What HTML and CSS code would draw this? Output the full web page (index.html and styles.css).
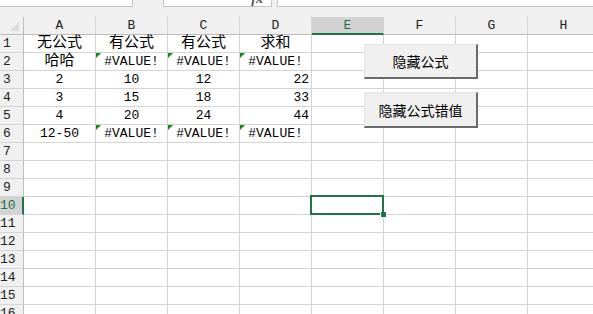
FILE: index.html
```html
<!DOCTYPE html>
<html lang="zh-CN">
<head>
  <meta charset="UTF-8" />
  <title>隐藏公式</title>
  <link rel="stylesheet" href="styles.css">
</head>
<body>
  <div class="formula-bar">
    <div class="name-box"></div>
    <div class="fx-box"><span class="fx">fx</span></div>
    <div class="input-box"></div>
  </div>

  <div class="sheet">
    <div class="corner"></div>
    <div class="col-head">A</div>
    <div class="col-head">B</div>
    <div class="col-head">C</div>
    <div class="col-head">D</div>
    <div class="col-head active">E</div>
    <div class="col-head">F</div>
    <div class="col-head">G</div>
    <div class="col-head">H</div>

    <div class="row-head">1</div>
    <div class="cell c zh">无公式</div>
    <div class="cell c zh">有公式</div>
    <div class="cell c zh">有公式</div>
    <div class="cell c zh">求和</div>
    <div class="cell"></div><div class="cell"></div><div class="cell"></div><div class="cell"></div>

    <div class="row-head">2</div>
    <div class="cell c zh">哈哈</div>
    <div class="cell c err">#VALUE!</div>
    <div class="cell c err">#VALUE!</div>
    <div class="cell c err">#VALUE!</div>
    <div class="cell"></div><div class="cell"></div><div class="cell"></div><div class="cell"></div>

    <div class="row-head">3</div>
    <div class="cell c">2</div>
    <div class="cell c">10</div>
    <div class="cell c">12</div>
    <div class="cell r">22</div>
    <div class="cell"></div><div class="cell"></div><div class="cell"></div><div class="cell"></div>

    <div class="row-head">4</div>
    <div class="cell c">3</div>
    <div class="cell c">15</div>
    <div class="cell c">18</div>
    <div class="cell r">33</div>
    <div class="cell"></div><div class="cell"></div><div class="cell"></div><div class="cell"></div>

    <div class="row-head">5</div>
    <div class="cell c">4</div>
    <div class="cell c">20</div>
    <div class="cell c">24</div>
    <div class="cell r">44</div>
    <div class="cell"></div><div class="cell"></div><div class="cell"></div><div class="cell"></div>

    <div class="row-head">6</div>
    <div class="cell c">12-50</div>
    <div class="cell c err">#VALUE!</div>
    <div class="cell c err">#VALUE!</div>
    <div class="cell c err">#VALUE!</div>
    <div class="cell"></div><div class="cell"></div><div class="cell"></div><div class="cell"></div>

    <div class="row-head">7</div>
    <div class="cell"></div><div class="cell"></div><div class="cell"></div><div class="cell"></div>
    <div class="cell"></div><div class="cell"></div><div class="cell"></div><div class="cell"></div>

    <div class="row-head">8</div>
    <div class="cell"></div><div class="cell"></div><div class="cell"></div><div class="cell"></div>
    <div class="cell"></div><div class="cell"></div><div class="cell"></div><div class="cell"></div>

    <div class="row-head">9</div>
    <div class="cell"></div><div class="cell"></div><div class="cell"></div><div class="cell"></div>
    <div class="cell"></div><div class="cell"></div><div class="cell"></div><div class="cell"></div>

    <div class="row-head active">10</div>
    <div class="cell"></div><div class="cell"></div><div class="cell"></div><div class="cell"></div>
    <div class="cell selected"></div><div class="cell"></div><div class="cell"></div><div class="cell"></div>

    <div class="row-head">11</div>
    <div class="cell"></div><div class="cell"></div><div class="cell"></div><div class="cell"></div>
    <div class="cell"></div><div class="cell"></div><div class="cell"></div><div class="cell"></div>

    <div class="row-head">12</div>
    <div class="cell"></div><div class="cell"></div><div class="cell"></div><div class="cell"></div>
    <div class="cell"></div><div class="cell"></div><div class="cell"></div><div class="cell"></div>

    <div class="row-head">13</div>
    <div class="cell"></div><div class="cell"></div><div class="cell"></div><div class="cell"></div>
    <div class="cell"></div><div class="cell"></div><div class="cell"></div><div class="cell"></div>

    <div class="row-head">14</div>
    <div class="cell"></div><div class="cell"></div><div class="cell"></div><div class="cell"></div>
    <div class="cell"></div><div class="cell"></div><div class="cell"></div><div class="cell"></div>

    <div class="row-head">15</div>
    <div class="cell"></div><div class="cell"></div><div class="cell"></div><div class="cell"></div>
    <div class="cell"></div><div class="cell"></div><div class="cell"></div><div class="cell"></div>

    <div class="row-head">16</div>
    <div class="cell"></div><div class="cell"></div><div class="cell"></div><div class="cell"></div>
    <div class="cell"></div><div class="cell"></div><div class="cell"></div><div class="cell"></div>
  </div>

  <button class="sheet-btn btn-hide">隐藏公式</button>
  <button class="sheet-btn btn-hide-err">隐藏公式错值</button>
</body>
</html>
```

FILE: styles.css
```css
body {
  margin: 0;
  width: 593px;
  height: 314px;
  overflow: hidden;
  position: relative;
  background-color: #ffffff;
  font-family: "Liberation Mono", "Noto Sans CJK SC", monospace;
  font-size: 13px;
  color: #000;
}

/* formula bar, only its lower edge is visible */
.formula-bar {
  height: 17px;
  background-color: #f0f0f0;
  display: flex;
  align-items: flex-start;
}

.name-box {
  width: 132px;
  height: 6px;
  background-color: #fff;
  border-right: 1px solid #c6c6c6;
  border-bottom: 1px solid #c6c6c6;
}

.fx-box {
  width: 107px;
  height: 6px;
  margin-left: 30px;
  background-color: #fff;
  border: 1px solid #c6c6c6;
  border-top: none;
  overflow: hidden;
  position: relative;
}

.fx {
  position: absolute;
  right: 8px;
  top: -9px;
  font-family: "Liberation Serif", serif;
  font-style: italic;
  font-weight: bold;
  font-size: 14px;
  color: #555;
}

.input-box {
  flex: 1;
  height: 6px;
  margin-left: 5px;
  background-color: #fff;
  border-left: 1px solid #c6c6c6;
  border-bottom: 1px solid #c6c6c6;
}

.sheet {
  display: grid;
  grid-template-columns: 24px repeat(8, 72px);
  grid-template-rows: 18px;
  grid-auto-rows: 18px;
}

.corner,
.col-head,
.row-head,
.cell {
  box-sizing: border-box;
  border-right: 1px solid #d4d4d4;
  border-bottom: 1px solid #d4d4d4;
}

.corner {
  background-color: #f0f0f0;
  border-bottom-color: #bdbdbd;
  border-right-color: #bdbdbd;
  position: relative;
}

.corner::after {
  content: "";
  position: absolute;
  right: 4px;
  bottom: 3px;
  border-left: 9px solid transparent;
  border-bottom: 9px solid #dcdcdc;
}

.col-head {
  background-color: #f0f0f0;
  border-bottom-color: #bdbdbd;
  text-align: center;
  line-height: 18px;
  color: #222;
}

.col-head.active {
  background-color: #d2d2d2;
  color: #217346;
  border-bottom: 2px solid #217346;
  line-height: 17px;
}

.row-head {
  background-color: #f0f0f0;
  border-right-color: #bdbdbd;
  line-height: 18px;
  padding-right: 9px;
  text-align: center;
  color: #222;
  overflow: visible;
  white-space: nowrap;
}

.row-head.active {
  background-color: #d2d2d2;
  color: #217346;
  border-right: 2px solid #217346;
  padding-right: 8px;
}

.cell {
  line-height: 17px;
  padding: 0 2px;
  white-space: nowrap;
  position: relative;
}

.c {
  text-align: center;
}

.r {
  text-align: right;
}

.zh {
  font-size: 15px;
}

/* green error marker in the corner */
.err::before {
  content: "";
  position: absolute;
  left: 0;
  top: 0;
  border-top: 5px solid #138a13;
  border-right: 5px solid transparent;
}

.selected::after {
  content: "";
  position: absolute;
  left: -2px;
  top: -2px;
  right: -1px;
  bottom: -1px;
  border: 2px solid #217346;
}

.selected::before {
  content: "";
  position: absolute;
  right: -3px;
  bottom: -3px;
  width: 5px;
  height: 5px;
  background-color: #217346;
  border: 1px solid #fff;
  border-width: 0 0 0 1px;
  z-index: 2;
}

.sheet-btn {
  position: absolute;
  left: 364px;
  width: 114px;
  background-color: #f0f0f0;
  border: 1px solid #e3e3e3;
  border-right: 2px solid #6a6a6a;
  border-bottom: 2px solid #6a6a6a;
  font-family: "Noto Sans CJK SC", sans-serif;
  font-size: 14px;
  color: #000;
  padding: 0;
}

.btn-hide {
  top: 44px;
  height: 35px;
}

.btn-hide-err {
  top: 92px;
  height: 36px;
}
```
